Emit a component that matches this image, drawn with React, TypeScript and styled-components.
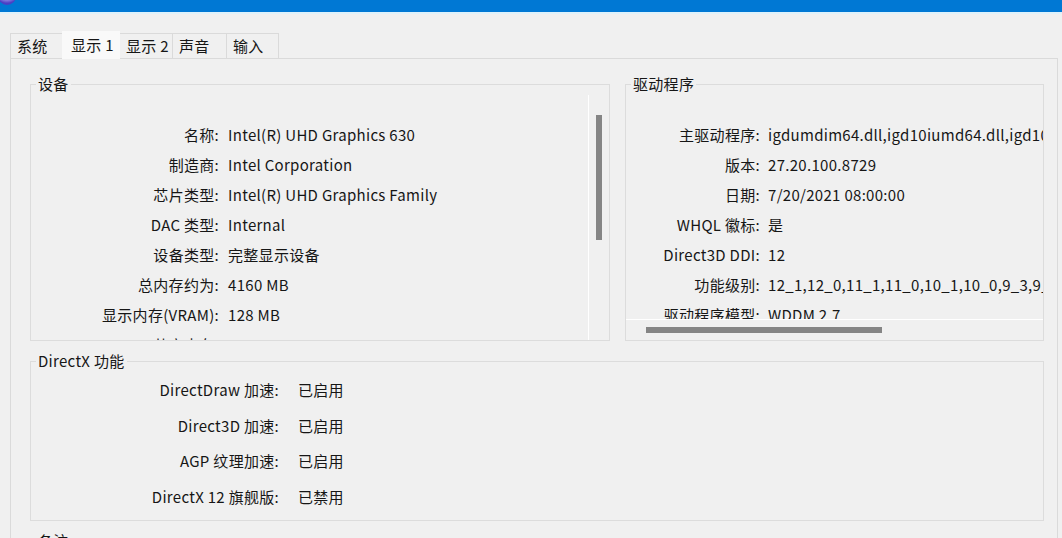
import { Fragment } from "react";
import styled, { createGlobalStyle } from "styled-components";

const GlobalStyle = createGlobalStyle`
  html, body {
    margin: 0;
    padding: 0;
    background: #f0f0f0;
  }
  body {
    font-family: "Noto Sans CJK SC", "Noto Sans", sans-serif;
    font-size: 15px;
    letter-spacing: 0.3px;
    color: #161616;
    overflow: hidden;
  }
`;

interface Active {
  $active?: boolean;
  $w: number;
}

interface GridProps {
  $label: number;
  $gap: number;
  $row: number;
  $top: number;
}

const Window = styled.div`
  width: 1062px;
  height: 538px;
  overflow: hidden;
  display: flex;
  flex-direction: column;
  background: #f0f0f0;
`;

const TitleBar = styled.div`
  height: 12px;
  flex-shrink: 0;
  background: #0078d4;
  border-bottom: 2px solid #dff2fb;
  display: flex;
  & > svg {
    display: block;
  }
`;

const TabStrip = styled.div`
  display: flex;
  align-items: flex-end;
  height: 27px;
  margin-top: 17px;
  padding-left: 11px;
  flex-shrink: 0;
`;

const Tab = styled.div<Active>`
  box-sizing: border-box;
  width: ${(p) => p.$w}px;
  height: ${(p) => (p.$active ? "28px" : "25px")};
  margin-left: -1px;
  margin-bottom: ${(p) => (p.$active ? "-1px" : "0")};
  padding-left: ${(p) => (p.$active ? "8px" : "6px")};
  line-height: ${(p) => (p.$active ? "26px" : "24px")};
  background: ${(p) => (p.$active ? "#f9f9f9" : "#f0f0f0")};
  border: 1px solid ${(p) => (p.$active ? "#f9f9f9" : "#dadada")};
  border-bottom: none;
  position: relative;
  z-index: ${(p) => (p.$active ? 2 : 1)};
  white-space: nowrap;
`;

const TabPage = styled.div`
  flex: 1;
  margin-left: 10px;
  width: 1048px;
  box-sizing: border-box;
  border: 1px solid #dadada;
  border-bottom: none;
  padding: 15px 0 0 19px;
  display: flex;
  flex-direction: column;
  gap: 10px;
`;

const TopRow = styled.div`
  display: flex;
  gap: 15px;
`;

const Group = styled.fieldset<{ $w: number }>`
  box-sizing: border-box;
  width: ${(p) => p.$w}px;
  margin: 0;
  padding: 0;
  border: 1px solid #dcdcdc;
  min-width: 0;
  & > legend {
    margin-left: 5px;
    padding: 0 2px;
    line-height: 20px;
    height: 20px;
  }
`;

const DeviceBody = styled.div`
  display: flex;
  height: 246px;
`;

const Viewport = styled.div<{ $h: number }>`
  flex: 1;
  height: ${(p) => p.$h}px;
  overflow: hidden;
  min-width: 0;
`;

const InfoGrid = styled.div<GridProps>`
  display: grid;
  grid-template-columns: ${(p) => p.$label}px max-content;
  grid-auto-rows: ${(p) => p.$row}px;
  column-gap: ${(p) => p.$gap}px;
  align-items: center;
  padding-top: ${(p) => p.$top}px;
  white-space: nowrap;
`;

const Label = styled.span`
  text-align: right;
`;

const Value = styled.span``;

const VScroll = styled.div`
  width: 20px;
  margin-top: 1px;
  border-left: 1px solid #ffffff;
  flex-shrink: 0;
`;

const VThumb = styled.div`
  width: 6px;
  height: 125px;
  margin: 20px 0 0 7px;
  background: #858585;
`;

const DriverBody = styled.div`
  display: flex;
  flex-direction: column;
  height: 246px;
`;

const HScroll = styled.div`
  height: 20px;
  border-top: 1px solid #ffffff;
  flex-shrink: 0;
`;

const HThumb = styled.div`
  width: 236px;
  height: 6px;
  margin: 7px 0 0 20px;
  background: #858585;
`;

const GroupBody = styled.div`
  height: 149px;
`;

const deviceRows = [
  ["名称:", "Intel(R) UHD Graphics 630"],
  ["制造商:", "Intel Corporation"],
  ["芯片类型:", "Intel(R) UHD Graphics Family"],
  ["DAC 类型:", "Internal"],
  ["设备类型:", "完整显示设备"],
  ["总内存约为:", "4160 MB"],
  ["显示内存(VRAM):", "128 MB"],
  ["共享内存:", "4032 MB"],
  ["当前显示模式:", "1920 x 1080 (32 bit) (60Hz)"],
  ["HDR:", "Not Supported"],
];

const driverRows = [
  ["主驱动程序:", "igdumdim64.dll,igd10iumd64.dll,igd10iumd64.dll,igd12umd64.dll"],
  ["版本:", "27.20.100.8729"],
  ["日期:", "7/20/2021 08:00:00"],
  ["WHQL 徽标:", "是"],
  ["Direct3D DDI:", "12"],
  ["功能级别:", "12_1,12_0,11_1,11_0,10_1,10_0,9_3,9_2,9_1"],
  ["驱动程序模型:", "WDDM 2.7"],
  ["MPO MaxPlanes:", "1"],
];

const dxRows = [
  ["DirectDraw 加速:", "已启用"],
  ["Direct3D 加速:", "已启用"],
  ["AGP 纹理加速:", "已启用"],
  ["DirectX 12 旗舰版:", "已禁用"],
];

const tabs = [
  { name: "系统", w: 53 },
  { name: "显示 1", w: 58, active: true },
  { name: "显示 2", w: 54 },
  { name: "声音", w: 55 },
  { name: "输入", w: 53 },
];

const AppIcon = () => (
  <svg width="18" height="12" viewBox="0 0 18 12">
    <defs>
      <radialGradient id="ic" cx="0.5" cy="0.2" r="0.7">
        <stop offset="0" stopColor="#f4f2ff" />
        <stop offset="0.6" stopColor="#a9a2f0" />
        <stop offset="1" stopColor="#4b3fc4" />
      </radialGradient>
    </defs>
    <circle cx="7" cy="-4" r="9" fill="url(#ic)" />
  </svg>
);

const Rows = ({ rows }: { rows: string[][] }) => (
  <>
    {rows.map(([l, v]) => (
      <Fragment key={l}>
        <Label>{l}</Label>
        <Value>{v}</Value>
      </Fragment>
    ))}
  </>
);

const App = () => {
  return (
    <Window>
      <GlobalStyle />
      <TitleBar>
        <AppIcon />
      </TitleBar>
      <TabStrip>
        {tabs.map((t) => (
          <Tab key={t.name} $w={t.w} $active={t.active}>
            {t.name}
          </Tab>
        ))}
      </TabStrip>
      <TabPage>
        <TopRow>
          <Group $w={580}>
            <legend>设备</legend>
            <DeviceBody>
              <Viewport $h={246}>
                <InfoGrid $label={188} $gap={9} $row={30} $top={25}>
                  <Rows rows={deviceRows} />
                </InfoGrid>
              </Viewport>
              <VScroll>
                <VThumb />
              </VScroll>
            </DeviceBody>
          </Group>
          <Group $w={419}>
            <legend>驱动程序</legend>
            <DriverBody>
              <Viewport $h={225}>
                <InfoGrid $label={134} $gap={8} $row={30} $top={25}>
                  <Rows rows={driverRows} />
                </InfoGrid>
              </Viewport>
              <HScroll>
                <HThumb />
              </HScroll>
            </DriverBody>
          </Group>
        </TopRow>
        <Group $w={1014}>
          <legend>DirectX 功能</legend>
          <GroupBody>
            <InfoGrid $label={248} $gap={19} $row={35.5} $top={1}>
              <Rows rows={dxRows} />
            </InfoGrid>
          </GroupBody>
        </Group>
        <Group $w={1014}>
          <legend>备注</legend>
          <GroupBody />
        </Group>
      </TabPage>
    </Window>
  );
};

export default App;
